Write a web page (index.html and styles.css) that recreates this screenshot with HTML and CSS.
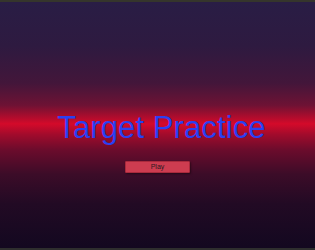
FILE: index.html
```html
<!DOCTYPE html>
<html lang="en">
<head>
    <meta charset="UTF-8">
    <meta name="viewport" content="width=device-width, initial-scale=1.0">
    <title>Target Practice</title>
    <link rel="stylesheet" href="styles.css">
</head>
<body>

    <!-- Main Menu -->
    <div class="menu-screen">
        <h1 class="game-title">Target Practice</h1>
        <button class="play-btn">Play</button>
    </div>

</body>
</html>
```

FILE: styles.css
```css
/* General Reset */
* {
    margin: 0;
    padding: 0;
    box-sizing: border-box;
}

body {
    width: 315px;
    height: 250px;
    overflow: hidden;
    background: #2c2c2c;
    font-family: 'Liberation Sans', Arial, sans-serif;
}

/* Menu Screen */
.menu-screen {
    height: 250px;
    border-top: 2px solid #35352c;
    border-bottom: 2px solid #2e2e2e;
    display: flex;
    flex-direction: column;
    align-items: center;
    background: linear-gradient(to bottom,
        #291d45 0%,
        #2e1a40 18%,
        #43163a 33%,
        #6e1234 42%,
        #a40d2e 46%,
        #d40a2a 49.5%,
        #a00b2c 54%,
        #6c0c2c 60%,
        #3c0c28 70%,
        #220a24 82%,
        #130820 100%);
}

.game-title {
    margin-top: 106px;
    margin-left: 8px;
    font-size: 31px;
    font-weight: normal;
    line-height: 40px;
    color: #2a40f2;
    letter-spacing: 0.1px;
}

/* Play Button */
.play-btn {
    margin-top: 13px;
    width: 65px;
    height: 12px;
    background-color: #cd3c50;
    border: 1px solid #a82a3c;
    border-radius: 1px;
    box-shadow: 1px 1px 2px rgba(0, 0, 0, 0.4);
    color: #2a1a20;
    font-family: 'Liberation Sans', Arial, sans-serif;
    font-size: 7px;
    line-height: 10px;
    cursor: pointer;
}
```
